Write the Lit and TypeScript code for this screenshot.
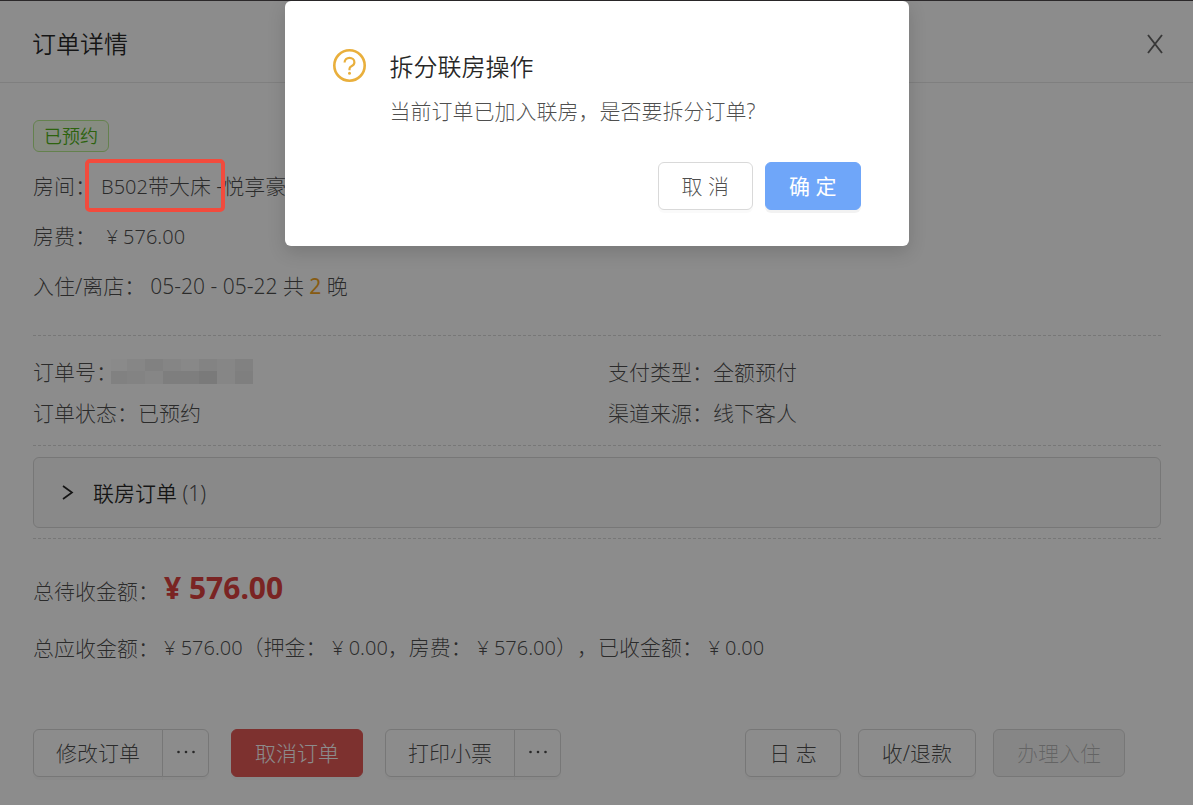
import { LitElement, html, css, svg } from "lit";
import { customElement } from "lit/decorators.js";

// Shades of the redacted order number, one list per row of blocks.
const REDACTED = [
  ["#fbfbfb", "#f4f4f4", "#ececec", "#f2f2f2", "#f7f7f7", "#eeeeee", "#f4f4f4", "#ececec"],
  ["#ebebeb", "#eeeeee", "#f4f4f4", "#e5e5e5", "#e5e5e5", "#dedede", "#f4f4f4", "#e7e7e7"],
];

@customElement("app-root")
export class AppRoot extends LitElement {
  static styles = css`
    :host {
      display: block;
      position: relative;
      box-sizing: border-box;
      min-height: 100vh;
      border-top: 1px solid #2b282a;
      background: #ffffff;
      color: rgba(0, 0, 0, 0.7);
      font-family: "Noto Sans", "Noto Sans CJK SC", sans-serif;
      font-size: 21px;
      font-weight: 300;
      line-height: 32px;
      text-spacing-trim: space-all;
    }
    * {
      box-sizing: border-box;
    }
    h1,
    h2,
    p,
    dl,
    dd {
      margin: 0;
      font-weight: 300;
    }
    .num {
      font-size: 20px;
    }
    .header {
      display: flex;
      align-items: center;
      justify-content: space-between;
      height: 82px;
      padding: 4px 28px 0 32px;
      border-bottom: 1px solid #e8e8e8;
    }
    .title {
      color: rgba(0, 0, 0, 0.85);
      font-size: 24px;
      font-weight: 350;
    }
    .close {
      display: flex;
      padding: 0;
      border: 0;
      background: none;
      color: rgba(0, 0, 0, 0.6);
    }
    .body {
      padding: 37px 32px 28px 33px;
    }
    .tag {
      display: block;
      width: fit-content;
      padding: 0 10px;
      border: 1px solid #b7eb8f;
      border-radius: 6px;
      background: #f6ffed;
      color: #52b41a;
      font-size: 18px;
      font-weight: 350;
      line-height: 30px;
      margin-bottom: 9px;
    }
    .line {
      display: flex;
      align-items: center;
      height: 50px;
      white-space: pre;
    }
    .line dd {
      padding-left: 5px;
    }
    .room {
      position: relative;
    }
    .mark {
      position: absolute;
      z-index: 2;
      inset: -13px -14px -12px -16px;
      border: 4px solid #f24b3d;
      border-radius: 5px;
    }
    .nights {
      color: #f5a623;
      font-weight: 400;
    }
    .rule {
      height: 0;
      margin: 0;
      border: 0;
      border-top: 1px dashed #d9d9d9;
    }
    .first {
      margin-top: 24px;
    }
    .info {
      display: grid;
      grid-template-columns: 1fr 1fr;
      column-gap: 22px;
      padding: 15px 0 12px;
    }
    .info div {
      display: flex;
      align-items: center;
      height: 41px;
    }
    .redacted {
      display: block;
      margin-left: -6px;
    }
    .linked {
      display: flex;
      align-items: center;
      gap: 18px;
      width: 100%;
      height: 71px;
      margin: 11px 0 10px;
      padding: 0 25px;
      border: 1px solid #d9d9d9;
      border-radius: 6px;
      background: #fafafa;
      color: rgba(0, 0, 0, 0.85);
      font: inherit;
      font-weight: 350;
      text-align: left;
    }
    .count {
      color: rgba(0, 0, 0, 0.7);
      font-weight: 300;
    }
    .sums {
      padding-top: 23px;
    }
    .sum {
      display: flex;
      align-items: center;
      height: 57px;
      white-space: pre;
    }
    .sum dd {
      padding-left: 5px;
    }
    .sum .due {
      padding-bottom: 5px;
      color: #de4340;
      font-size: 30px;
      font-weight: 700;
    }
    .footer {
      display: flex;
      align-items: center;
      justify-content: space-between;
      padding: 53px 36px 0 0;
    }
    .group {
      display: flex;
      gap: 22px;
    }
    .right {
      gap: 17px;
    }
    .split {
      display: flex;
    }
    .btn {
      display: flex;
      align-items: center;
      justify-content: center;
      height: 48px;
      padding: 0 23px;
      border: 1px solid #d9d9d9;
      border-radius: 6px;
      background: #ffffff;
      box-shadow: 0 3px 0 rgba(0, 0, 0, 0.02);
      color: rgba(0, 0, 0, 0.7);
      font: inherit;
      white-space: pre;
    }
    .split .btn:first-child {
      padding: 0 22px;
      border-radius: 6px 0 0 6px;
    }
    .split .more {
      width: 47px;
      margin-left: -1px;
      padding: 0;
      border-radius: 0 6px 6px 0;
    }
    .danger {
      border-color: #e35957;
      background: #e35957;
      color: #ffffff;
    }
    .primary {
      border-color: #6fa6f9;
      background: #6fa6f9;
      color: #ffffff;
      font-weight: 400;
      box-shadow: 0 3px 0 rgba(0, 0, 0, 0.05);
    }
    .btn:disabled {
      background: #f5f5f5;
      color: rgba(0, 0, 0, 0.25);
      box-shadow: none;
    }
    .mask {
      position: absolute;
      z-index: 1;
      inset: 0;
      background: rgba(0, 0, 0, 0.45);
    }
    .overlay {
      position: absolute;
      z-index: 3;
      inset: 0;
      display: flex;
      align-items: flex-start;
      justify-content: center;
    }
    .dialog {
      width: 624px;
      max-width: 100%;
      padding: 48px 48px 36px;
      border-radius: 6px;
      background: #ffffff;
      box-shadow: 0 6px 18px rgba(0, 0, 0, 0.15);
    }
    .message {
      display: flex;
      align-items: flex-start;
      gap: 24px;
    }
    .icon {
      flex: none;
    }
    .question {
      color: rgba(0, 0, 0, 0.85);
      font-size: 24px;
      font-weight: 350;
      line-height: 36px;
    }
    .text {
      margin-top: 10px;
      line-height: 32px;
    }
    .actions {
      display: flex;
      justify-content: flex-end;
      gap: 12px;
      margin-top: 35px;
    }
  `;

  private dots() {
    return html`<svg width="20" height="20" viewBox="0 0 20 20" fill="currentColor" aria-hidden="true">
      <circle cx="2.5" cy="9" r="1.3" /><circle cx="10" cy="9" r="1.3" /><circle cx="17.5" cy="9" r="1.3" />
    </svg>`;
  }

  private money(amount: string) {
    return html`<span class="num">¥ ${amount}</span>`;
  }

  render() {
    return html`
      <header class="header">
        <h1 class="title">订单详情</h1>
        <button class="close" aria-label="关闭">
          <svg width="20" height="20" viewBox="0 0 20 20" fill="none" stroke="currentColor" stroke-width="1.9">
            <path d="M3 1L17 19M17 1L3 19" />
          </svg>
        </button>
      </header>
      <main class="body">
        <span class="tag">已预约</span>
        <dl>
          <div class="line"><dt>房间：</dt><dd><span class="room"><span class="num">B502</span>带大床<span class="mark"></span></span> -悦享豪</dd></div>
          <div class="line"><dt>房费：</dt><dd> ${this.money("576.00")}</dd></div>
          <div class="line"><dt>入住/离店：</dt><dd>05-20 - 05-22 共 <span class="nights">2</span> 晚</dd></div>
        </dl>
        <hr class="rule first" />
        <dl class="info">
          <div>
            <dt>订单号：</dt>
            <dd>
              <svg class="redacted" width="142" height="25" viewBox="0 0 142 25" shape-rendering="crispEdges" aria-hidden="true">
                ${REDACTED.map((row, y) =>
                  row.map(
                    (fill, x) => svg`<rect x=${x ? x * 18 - 2 : 0} y=${y * 12} width=${x ? 18 : 16} height=${y ? 13 : 12} fill=${fill} />`,
                  ),
                )}
              </svg>
            </dd>
          </div>
          <div><dt>支付类型：</dt><dd>全额预付</dd></div>
          <div><dt>订单状态：</dt><dd>已预约</dd></div>
          <div><dt>渠道来源：</dt><dd>线下客人</dd></div>
        </dl>
        <hr class="rule" />
        <button class="linked" aria-expanded="false">
          <svg width="16" height="18" viewBox="0 0 16 18" fill="none" stroke="currentColor" stroke-width="1.7" aria-hidden="true">
            <path d="M4 2L13 8.5L4 15" />
          </svg>
          <span>联房订单 <span class="count">(1)</span></span>
        </button>
        <hr class="rule" />
        <dl class="sums">
          <div class="sum"><dt>总待收金额：</dt><dd class="due">¥ 576.00</dd></div>
          <div class="sum"><dt>总应收金额：</dt><dd>${this.money("576.00")}（押金： ${this.money("0.00")}，房费： ${this.money("576.00")}），已收金额： ${this.money("0.00")}</dd></div>
        </dl>
        <footer class="footer">
          <div class="group">
            <div class="split">
              <button class="btn">修改订单</button>
              <button class="btn more" aria-label="更多">${this.dots()}</button>
            </div>
            <button class="btn danger">取消订单</button>
            <div class="split">
              <button class="btn">打印小票</button>
              <button class="btn more" aria-label="更多">${this.dots()}</button>
            </div>
          </div>
          <div class="group right">
            <button class="btn">日 志</button>
            <button class="btn">收/退款</button>
            <button class="btn" disabled>办理入住</button>
          </div>
        </footer>
      </main>
      <div class="mask"></div>
      <div class="overlay">
        <section class="dialog" role="dialog" aria-modal="true" aria-labelledby="question">
          <div class="message">
            <svg class="icon" width="33" height="33" viewBox="0 0 33 33" fill="none" stroke="#e9af3c" aria-hidden="true">
              <circle cx="16.5" cy="16.5" r="15.2" stroke-width="2.6" />
              <path d="M11.6 13.6C11.6 10.6 13.8 8.8 16.5 8.8C19.2 8.8 21.4 10.7 21.4 13.2C21.4 15.2 20.2 16.4 18.4 17.2C17.1 17.8 16.5 18.5 16.5 19.7V21.2" stroke-width="2.2" />
              <circle cx="16.5" cy="24.3" r="1.5" fill="#e9af3c" stroke="none" />
            </svg>
            <div>
              <h2 class="question" id="question">拆分联房操作</h2>
              <p class="text">当前订单已加入联房，是否要拆分订单?</p>
            </div>
          </div>
          <div class="actions">
            <button class="btn">取 消</button>
            <button class="btn primary">确 定</button>
          </div>
        </section>
      </div>
    `;
  }
}
